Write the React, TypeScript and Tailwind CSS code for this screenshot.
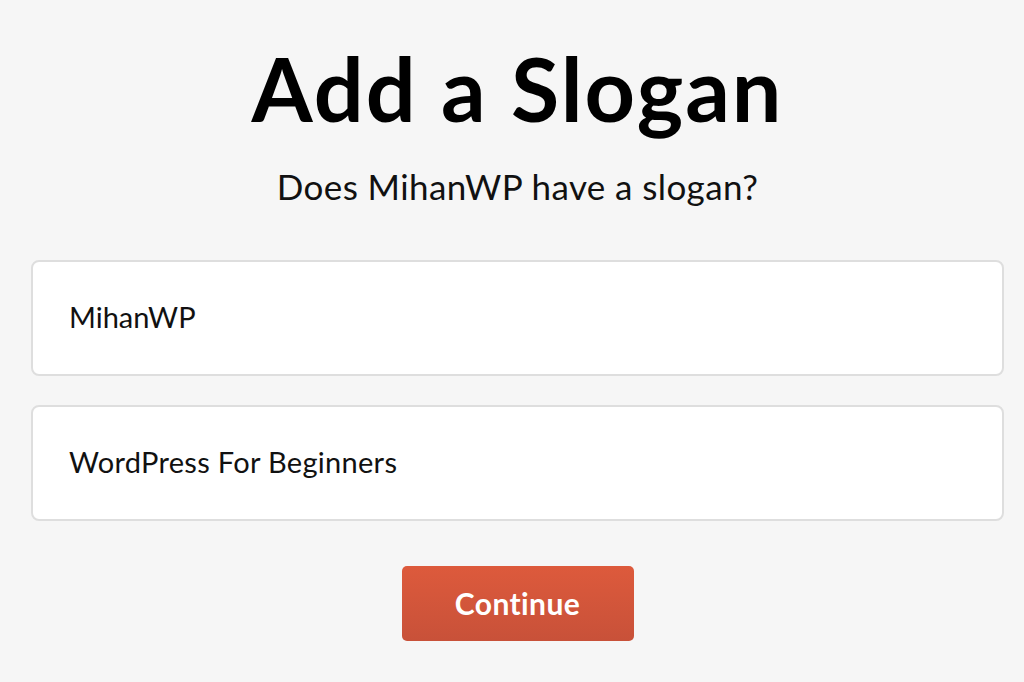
import React from "react";

export default function App() {
  return (
    <div
      className="w-[1024px] h-[682px] bg-[#f6f6f6] overflow-hidden pl-[31px] pr-[20px] flex flex-col items-center"
      style={{ fontFamily: "Lato, 'Noto Sans', sans-serif" }}
    >
      <h1 className="mt-[38px] text-[88px] leading-[100px] font-bold text-black tracking-[2px]">
        Add a Slogan
      </h1>
      <p className="mt-[28px] text-[35px] leading-[40px] text-[#111] tracking-[0.4px]">
        Does MihanWP have a slogan?
      </p>
      <div className="mt-[54px] w-full flex flex-col gap-[29px]">
        <div className="h-[116px] bg-white border-2 border-[#dedede] rounded-[8px] flex items-center px-[36px]">
          <span className="text-[29px] text-[#111] relative top-[-1px]">MihanWP</span>
        </div>
        <div className="h-[116px] bg-white border-2 border-[#dedede] rounded-[8px] flex items-center px-[36px]">
          <span className="text-[29px] text-[#111] tracking-[0.3px] relative top-[-1px]">WordPress For Beginners</span>
        </div>
      </div>
      <button className="mt-[45px] w-[232px] h-[75px] rounded-[5px] bg-gradient-to-b from-[#dd5a3c] to-[#c85139] text-white text-[30px] font-bold tracking-[0.4px] flex items-center justify-center">
        Continue
      </button>
    </div>
  );
}
